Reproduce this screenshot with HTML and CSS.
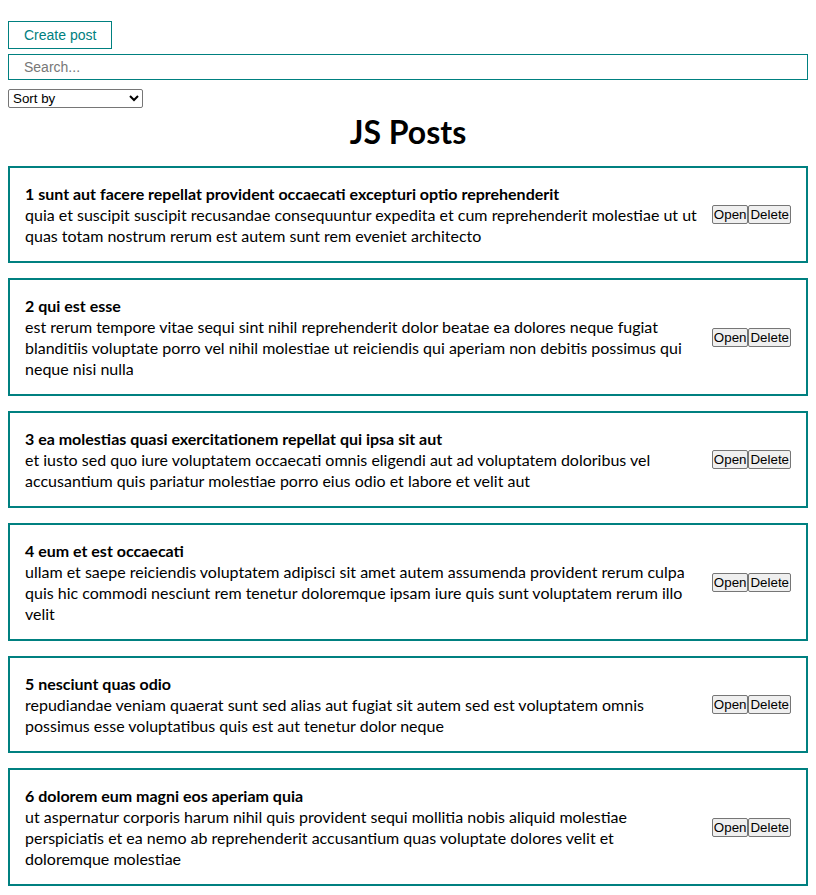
FILE: index.html
```html
<!DOCTYPE html>
<html>
<head>
<meta charset="utf-8">
<link rel="stylesheet" href="styles.css">
</head>
<body>
<div class="app">
  <button class="create-btn">Create post</button>
  <input class="search" type="text" placeholder="Search...">
  <select class="sort">
    <option>Sort by</option>
  </select>
  <h1 class="title">JS Posts</h1>
  <div class="list">
    <div class="post">
      <div class="post-content">
        <strong>1 sunt aut facere repellat provident occaecati excepturi optio reprehenderit</strong>
        <div>quia et suscipit suscipit recusandae consequuntur expedita et cum reprehenderit molestiae ut ut quas totam nostrum rerum est autem sunt rem eveniet architecto</div>
      </div>
      <div class="post-btns"><button class="btn">Open</button><button class="btn">Delete</button></div>
    </div>
    <div class="post">
      <div class="post-content">
        <strong>2 qui est esse</strong>
        <div>est rerum tempore vitae sequi sint nihil reprehenderit dolor beatae ea dolores neque fugiat blanditiis voluptate porro vel nihil molestiae ut reiciendis qui aperiam non debitis possimus qui neque nisi nulla</div>
      </div>
      <div class="post-btns"><button class="btn">Open</button><button class="btn">Delete</button></div>
    </div>
    <div class="post">
      <div class="post-content">
        <strong>3 ea molestias quasi exercitationem repellat qui ipsa sit aut</strong>
        <div>et iusto sed quo iure voluptatem occaecati omnis eligendi aut ad voluptatem doloribus vel accusantium quis pariatur molestiae porro eius odio et labore et velit aut</div>
      </div>
      <div class="post-btns"><button class="btn">Open</button><button class="btn">Delete</button></div>
    </div>
    <div class="post">
      <div class="post-content">
        <strong>4 eum et est occaecati</strong>
        <div>ullam et saepe reiciendis voluptatem adipisci sit amet autem assumenda provident rerum culpa quis hic commodi nesciunt rem tenetur doloremque ipsam iure quis sunt voluptatem rerum illo velit</div>
      </div>
      <div class="post-btns"><button class="btn">Open</button><button class="btn">Delete</button></div>
    </div>
    <div class="post">
      <div class="post-content">
        <strong>5 nesciunt quas odio</strong>
        <div>repudiandae veniam quaerat sunt sed alias aut fugiat sit autem sed est voluptatem omnis possimus esse voluptatibus quis est aut tenetur dolor neque</div>
      </div>
      <div class="post-btns"><button class="btn">Open</button><button class="btn">Delete</button></div>
    </div>
    <div class="post">
      <div class="post-content">
        <strong>6 dolorem eum magni eos aperiam quia</strong>
        <div>ut aspernatur corporis harum nihil quis provident sequi mollitia nobis aliquid molestiae perspiciatis et ea nemo ab reprehenderit accusantium quas voluptate dolores velit et doloremque molestiae</div>
      </div>
      <div class="post-btns"><button class="btn">Open</button><button class="btn">Delete</button></div>
    </div>
  </div>
</div>
</body>
</html>
```

FILE: styles.css
```css
body {
  margin: 8px;
  font-family: Lato, "Noto Sans", sans-serif;
  font-size: 16px;
  color: #000;
  background: #fff;
}
.app {
  padding-top: 13px;
}
.create-btn {
  display: block;
  padding: 5px 15px;
  border: 1px solid teal;
  background: #fff;
  color: teal;
  font-family: "Liberation Sans", Arial, sans-serif;
  font-size: 14px;
  line-height: 16px;
  height: 28px;
}
.search {
  display: block;
  box-sizing: border-box;
  width: 100%;
  height: 26px;
  margin-top: 5px;
  padding: 5px 15px;
  border: 1px solid teal;
  font-family: "Liberation Sans", Arial, sans-serif;
  font-size: 14px;
  outline: none;
}
.search::placeholder {
  color: #777;
}
.sort {
  display: block;
  margin-top: 9px;
  width: 135px;
  height: 19px;
  font-family: "Liberation Sans", Arial, sans-serif;
  font-size: 13.33px;
  padding: 0;
  border: 1px solid #767676;
  border-radius: 2px;
  background: #fff;
}
.title {
  margin: 2px 0 0;
  text-align: center;
  font-size: 32px;
  line-height: 43px;
  font-weight: 700;
}
.post {
  display: flex;
  align-items: center;
  justify-content: space-between;
  gap: 10px;
  margin-top: 13px;
  padding: 15px;
  border: 2px solid teal;
  line-height: 21px;
}
.post + .post {
  margin-top: 15px;
}
.post-content strong {
  font-weight: 700;
}
.post-btns {
  display: flex;
  flex-shrink: 0;
}
.btn {
  font-family: "Liberation Sans", Arial, sans-serif;
  font-size: 13.33px;
  padding: 1px 1px;
  border: 1px solid #767676;
  border-radius: 2px;
  background: #efefef;
  color: #000;
  line-height: 15px;
}
```
